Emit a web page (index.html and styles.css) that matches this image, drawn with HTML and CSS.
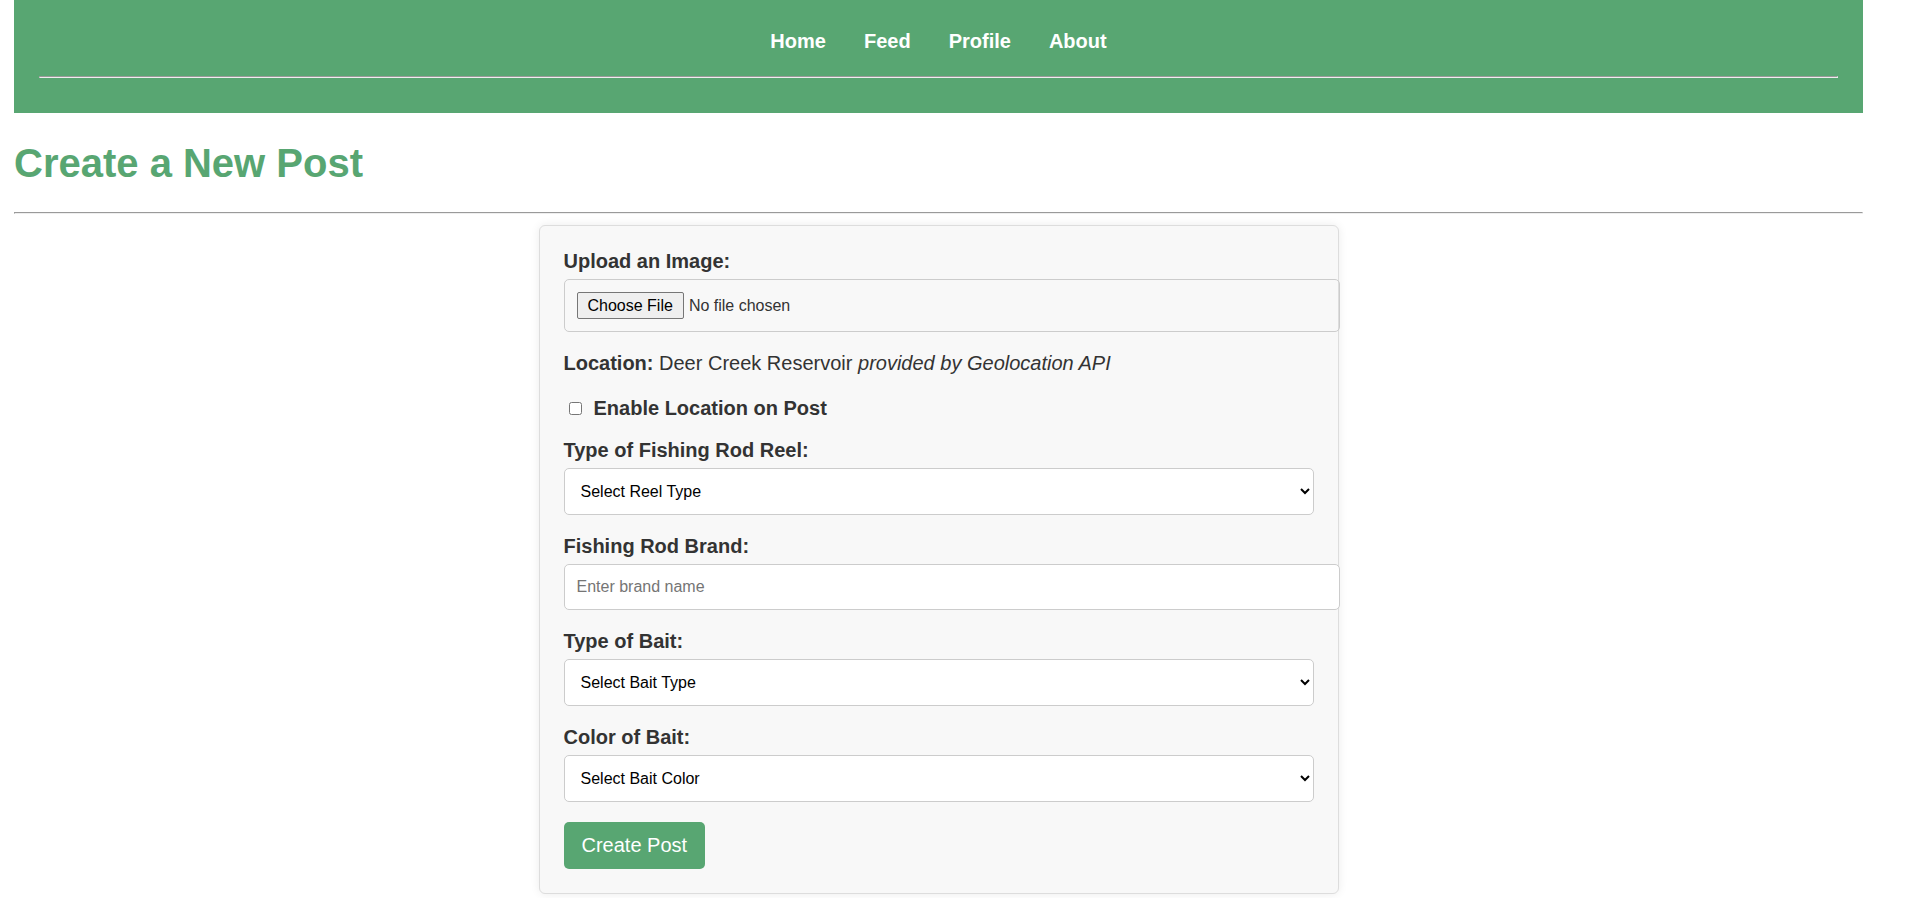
FILE: index.html
```html
<!DOCTYPE html>
<html lang="en">
<head>
<meta charset="utf-8">
<title>Create a New Post</title>
<link rel="stylesheet" href="styles.css">
</head>
<body>
<div class="page">
  <header class="site-header">
    <nav>
      <ul class="nav-list">
        <li><a class="nav-link" href="#">Home</a></li>
        <li><a class="nav-link" href="#">Feed</a></li>
        <li><a class="nav-link" href="#">Profile</a></li>
        <li><a class="nav-link" href="#">About</a></li>
      </ul>
    </nav>
    <hr class="header-rule">
  </header>

  <main class="content">
    <h1 class="page-title">Create a New Post</h1>
    <hr class="title-rule">

    <form class="post-card">
      <div class="field">
        <label class="field-label" for="image">Upload an Image:</label>
        <input class="file-input" type="file" id="image">
      </div>

      <p class="location"><strong>Location:</strong> Deer Creek Reservoir <em>provided by Geolocation API</em></p>

      <div class="check-row">
        <input class="check-box" type="checkbox" id="enable-location">
        <label class="check-label" for="enable-location">Enable Location on Post</label>
      </div>

      <div class="field">
        <label class="field-label" for="reel">Type of Fishing Rod Reel:</label>
        <select class="select-input" id="reel">
          <option>Select Reel Type</option>
        </select>
      </div>

      <div class="field">
        <label class="field-label" for="brand">Fishing Rod Brand:</label>
        <input class="text-input" type="text" id="brand" placeholder="Enter brand name">
      </div>

      <div class="field">
        <label class="field-label" for="bait">Type of Bait:</label>
        <select class="select-input" id="bait">
          <option>Select Bait Type</option>
        </select>
      </div>

      <div class="field">
        <label class="field-label" for="color">Color of Bait:</label>
        <select class="select-input" id="color">
          <option>Select Bait Color</option>
        </select>
      </div>

      <button class="submit-btn" type="button">Create Post</button>
    </form>
  </main>
</div>
</body>
</html>
```

FILE: styles.css
```css
html, body {
  margin: 0;
  padding: 0;
}

body {
  font-family: "Liberation Sans", Arial, sans-serif;
  color: #333;
  background: #fff;
}

.page {
  width: 1849px;
  margin-left: 14px;
  padding-bottom: 40px;
}

/* Header */
.site-header {
  background: #58a672;
  padding: 30px 25px 35px;
}

.nav-list {
  list-style: none;
  margin: 0;
  padding: 0;
  display: flex;
  justify-content: center;
  gap: 38px;
}

.nav-link {
  color: #fff;
  font-weight: bold;
  font-size: 20px;
  text-decoration: none;
  line-height: 23px;
  display: block;
}

.header-rule {
  margin: 23px 0 0;
}

/* Title */
.page-title {
  color: #58a672;
  font-size: 40px;
  font-weight: bold;
  line-height: 46px;
  margin: 27px 0 26px;
}

.title-rule {
  margin: 0 0 11px;
}

/* Card */
.post-card {
  width: 800px;
  box-sizing: border-box;
  margin: 0 auto;
  padding: 24px;
  background: #f8f8f8;
  border: 1px solid #ddd;
  border-radius: 6px;
  box-shadow: 0 0 10px rgba(0, 0, 0, 0.08);
}

.field {
  margin-bottom: 20px;
}

.field-label {
  display: block;
  font-size: 20px;
  font-weight: bold;
  line-height: 23px;
  margin-bottom: 6px;
  color: #333;
}

.file-input {
  display: block;
  width: 100%;
  height: 27px;
  padding: 12px;
  border: 1px solid #ccc;
  border-radius: 5px;
  font-family: "Liberation Sans", Arial, sans-serif;
  font-size: 16px;
  color: #333;
  background: transparent;
}

.file-input::file-selector-button {
  font-family: "Liberation Sans", Arial, sans-serif;
  font-size: 16px;
  height: 27px;
  padding: 0 10px;
  margin-right: 5px;
  border: 1px solid #767676;
  border-radius: 2px;
  background: #efefef;
  color: #000;
}

.location {
  font-size: 20px;
  line-height: 23px;
  margin: 0 0 22px;
  color: #333;
}

.check-row {
  display: flex;
  align-items: center;
  margin-bottom: 19px;
}

.check-box {
  width: 13px;
  height: 13px;
  margin: 0 12px 0 5px;
}

.check-label {
  font-size: 20px;
  font-weight: bold;
  line-height: 23px;
  color: #333;
}

.select-input {
  display: block;
  width: 100%;
  height: 47px;
  box-sizing: border-box;
  padding: 0 13px 0 12px;
  border: 1px solid #ccc;
  border-radius: 5px;
  background-color: #fff;
  font-family: "Liberation Sans", Arial, sans-serif;
  font-size: 16px;
  color: #000;
}

.text-input {
  display: block;
  width: 100%;
  height: 20px;
  padding: 12px;
  border: 1px solid #ccc;
  border-radius: 5px;
  background: #fff;
  font-family: "Liberation Sans", Arial, sans-serif;
  font-size: 16px;
  color: #000;
}

.text-input::placeholder {
  color: #757575;
}

.submit-btn {
  display: block;
  height: 47px;
  padding: 0 18px;
  border: none;
  border-radius: 5px;
  background: #58a672;
  color: #fff;
  font-family: "Liberation Sans", Arial, sans-serif;
  font-size: 20px;
  cursor: pointer;
}
```
